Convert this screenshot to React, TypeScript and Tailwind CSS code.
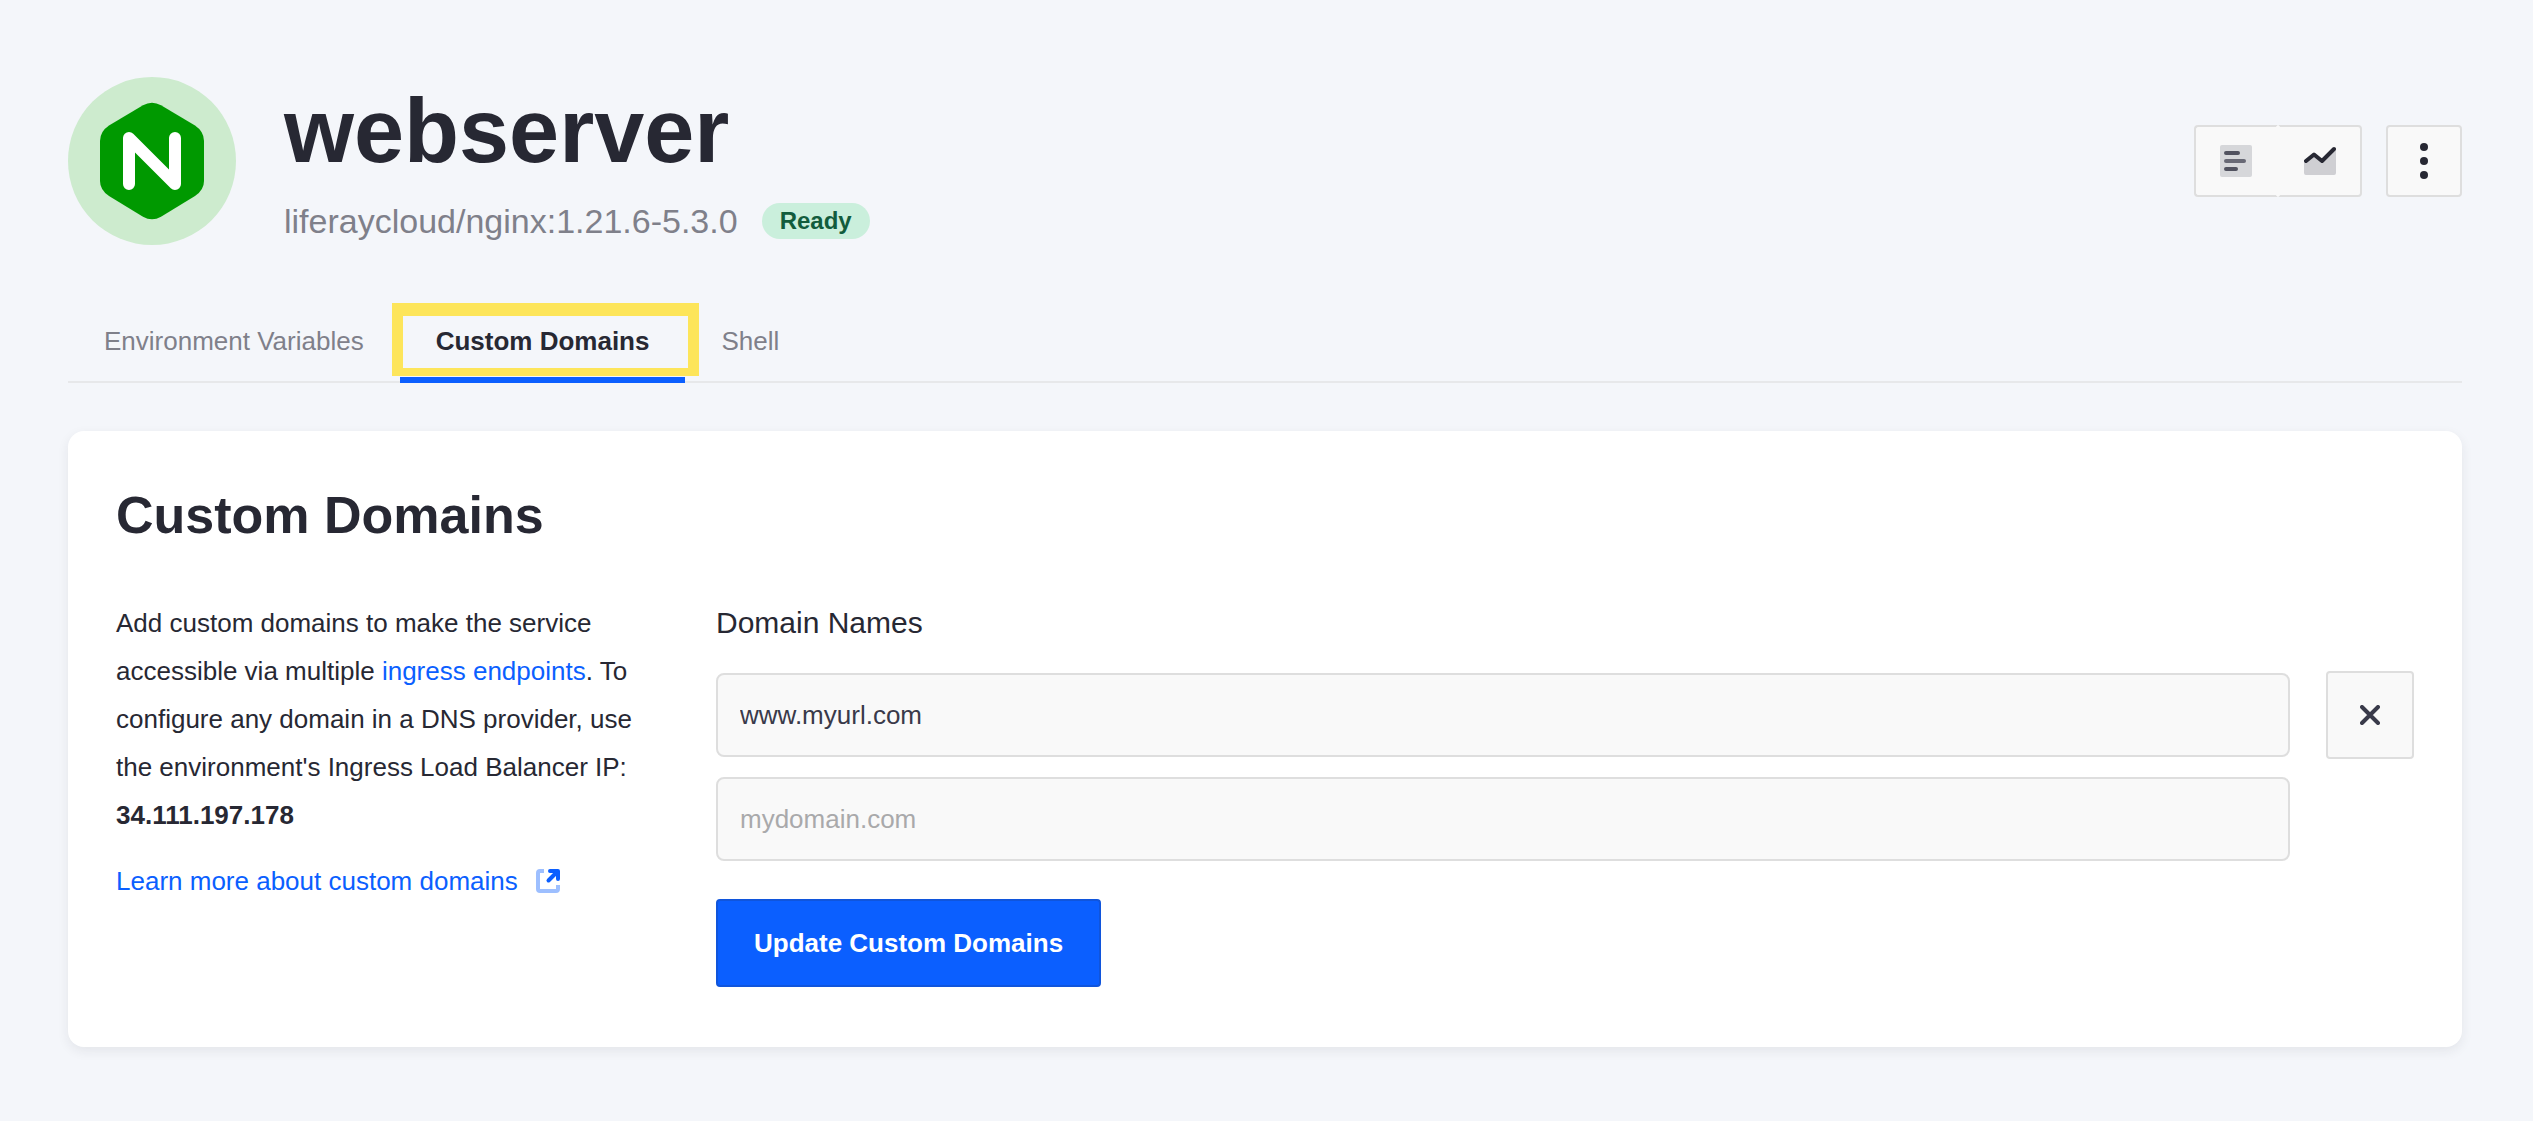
import { useState } from "react";

function NginxLogo() {
  return (
    <svg viewBox="0 0 168 168" className="size-[168px] shrink-0" role="img" aria-label="nginx">
      <circle cx="84" cy="84" r="84" fill="#cdebce" />
      <path
        fill="#009900"
        d="M75 28.3Q84 23.2 93 28.3L127 48.500Q136 54.500 136 64V104Q136 113 127 119L93 139.7Q84 144.8 75 139.7L41 119Q32 113 32 104V64Q32 54.500 41 48.500Z"
      />
      <path
        d="M61 107V61L107 107V61"
        fill="none"
        stroke="#fff"
        strokeWidth="12"
        strokeLinecap="round"
        strokeLinejoin="round"
      />
    </svg>
  );
}

function LogsIcon() {
  return (
    <svg viewBox="0 0 32 32" className="size-8" aria-hidden="true">
      <rect width="32" height="32" rx="2" fill="#d6d7da" />
      <g strokeWidth="4" strokeLinecap="round">
        <path d="M6 8H18M6 24H16" stroke="#51525f" />
        <path d="M6 16H24" stroke="#686975" />
      </g>
    </svg>
  );
}

function MetricsIcon() {
  return (
    <svg viewBox="0 0 32 32" className="size-8" aria-hidden="true">
      <path d="M0 17L10 9L18 16L32 4V28Q32 30 30 30H2Q0 30 0 28Z" fill="#cfcfd3" />
      <path
        d="M2 16L10 9.500L18 16L30 4"
        fill="none"
        stroke="#272833"
        strokeWidth="4"
        strokeLinecap="round"
        strokeLinejoin="round"
      />
    </svg>
  );
}

function MoreIcon() {
  return (
    <svg viewBox="0 0 8 36" className="h-9 w-2" fill="#272833" aria-hidden="true">
      <circle cx="4" cy="4" r="4" />
      <circle cx="4" cy="18" r="4" />
      <circle cx="4" cy="32" r="4" />
    </svg>
  );
}

function ExternalIcon() {
  return (
    <svg viewBox="0 0 24 24" className="size-6" fill="none" strokeWidth="4" aria-hidden="true">
      <path d="M8 2H4Q2 2 2 4V20Q2 22 4 22H20Q22 22 22 20V16" stroke="#9dbfff" />
      <g stroke="#0b5fff" strokeLinecap="round" strokeLinejoin="round">
        <path d="M14 2H22V10" />
        <path d="M12.500 11.500L21 3" />
      </g>
    </svg>
  );
}

function CloseIcon() {
  return (
    <svg viewBox="0 0 20 20" className="size-5" aria-hidden="true">
      <path d="M2 2L18 18M18 2L2 18" stroke="#393a4a" strokeWidth="4" strokeLinecap="round" />
    </svg>
  );
}

const toolButton = "flex h-[72px] items-center justify-center border-2 border-[#dedede] bg-[#f9f9f9]";
const field =
  "h-[84px] min-w-0 flex-1 rounded-lg border-2 border-[#dedede] bg-[#f9f9f9] px-[22px] text-[#393a4a] placeholder:text-[#a9a9ab] focus:outline-none";

export default function App() {
  const [domain, setDomain] = useState("www.myurl.com");
  const [nextDomain, setNextDomain] = useState("");

  return (
    <div className="min-h-screen bg-[#f4f6fa] pt-[77px] pr-[71px] pb-[74px] pl-[68px] font-['Liberation_Sans',Arial,sans-serif] text-[26px] leading-[48px] text-[#272833]">
      <header className="flex items-center justify-between">
        <div className="flex items-center gap-12">
          <NginxLogo />
          <div className="flex flex-col gap-3">
            <h1 className="text-[90px] leading-[108px] font-bold">webserver</h1>
            <div className="flex items-center gap-6">
              <span className="text-[34px] text-[#7f808a]">liferaycloud/nginx:1.21.6-5.3.0</span>
              <span className="rounded-full bg-[#caefdc] px-[18px] text-[24px] leading-[36px] font-bold text-[#125c3d]">
                Ready
              </span>
            </div>
          </div>
        </div>
        <div className="flex gap-6">
          <div className="flex">
            <button type="button" aria-label="Logs" className={`${toolButton} w-[84px] rounded-l-sm border-r-[#f9f9f9]`}>
              <LogsIcon />
            </button>
            <button type="button" aria-label="Metrics" className={`${toolButton} w-[84px] rounded-r-sm border-l-[#f9f9f9]`}>
              <MetricsIcon />
            </button>
          </div>
          <button type="button" aria-label="More options" className={`${toolButton} w-[76px] rounded-sm`}>
            <MoreIcon />
          </button>
        </div>
      </header>

      <nav className="mt-[54px] flex shadow-[inset_0_-2px_0_#e7e8ea]">
        <a href="#environment-variables" className="px-9 py-[18px] text-[#7f808a]">
          Environment Variables
        </a>
        <a
          href="#custom-domains"
          aria-current="page"
          className="relative border-b-[6px] border-[#0b5fff] px-9 pt-[18px] pb-3 font-bold"
        >
          Custom Domains
          <span className="pointer-events-none absolute -right-[14px] bottom-px -left-2 h-[73px] border-x-[11px] border-t-[13px] border-b-8 border-[#fde55a]" />
        </a>
        <a href="#shell" className="px-9 py-[18px] text-[#7f808a]">
          Shell
        </a>
      </nav>

      <main className="mt-12 rounded-2xl bg-white px-12 pt-12 pb-[60px] shadow-[0_4px_12px_rgba(39,40,51,0.08)]">
        <h2 className="text-[52px] leading-[72px] font-bold">Custom Domains</h2>
        <div className="mt-12 flex gap-[60px]">
          <section className="w-[540px] shrink-0">
            <p>
              Add custom domains to make the service accessible via multiple{" "}
              <a href="#ingress-endpoints" className="text-[#0b5fff]">
                ingress endpoints
              </a>
              . To configure any domain in a DNS provider, use the environment's Ingress Load Balancer IP:{" "}
              <strong>34.111.197.178</strong>
            </p>
            <a href="#learn-more" className="mt-[18px] flex items-center gap-[18px] text-[#0b5fff]">
              Learn more about custom domains
              <ExternalIcon />
            </a>
          </section>

          <form className="min-w-0 flex-1" onSubmit={(e) => e.preventDefault()}>
            <label htmlFor="domain" className="block text-[30px]">
              Domain Names
            </label>
            <div className="mt-6 flex items-center gap-9">
              <input id="domain" className={field} value={domain} onChange={(e) => setDomain(e.target.value)} />
              <button
                type="button"
                aria-label="Remove domain"
                onClick={() => setDomain("")}
                className="flex size-[88px] shrink-0 items-center justify-center rounded-sm border-2 border-[#dedede] bg-[#f9f9f9]"
              >
                <CloseIcon />
              </button>
            </div>
            <div className="mt-4 flex h-[88px] items-center pr-[124px]">
              <input
                aria-label="Additional domain name"
                className={field}
                placeholder="mydomain.com"
                value={nextDomain}
                onChange={(e) => setNextDomain(e.target.value)}
              />
            </div>
            <button
              type="submit"
              className="mt-9 block h-[88px] rounded-sm border-2 border-[#1055dc] bg-[#0b5fff] px-9 font-bold text-white"
            >
              Update Custom Domains
            </button>
          </form>
        </div>
      </main>
    </div>
  );
}
